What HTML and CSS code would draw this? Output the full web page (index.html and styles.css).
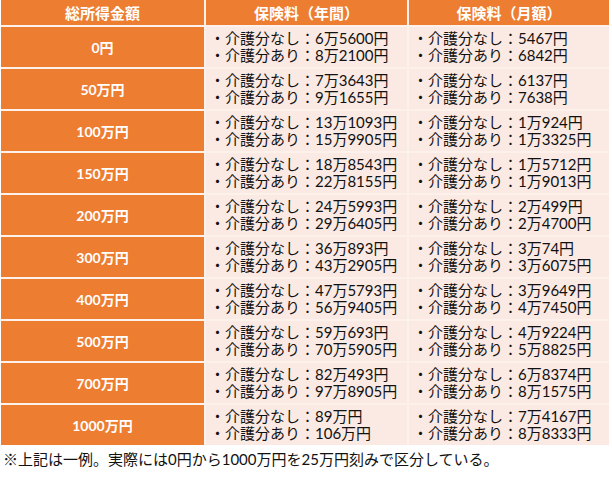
FILE: index.html
```html
<!DOCTYPE html>
<html lang="ja">
<head>
<meta charset="utf-8">
<link rel="stylesheet" href="styles.css">
</head>
<body>
<div class="table">
  <div class="th">総所得金額</div>
  <div class="th">保険料（年間）</div>
  <div class="th">保険料（月額）</div>

  <div class="label">0円</div>
  <div class="cell"><div>・介護分なし：6万5600円</div><div>・介護分あり：8万2100円</div></div>
  <div class="cell"><div>・介護分なし：5467円</div><div>・介護分あり：6842円</div></div>

  <div class="label">50万円</div>
  <div class="cell"><div>・介護分なし：7万3643円</div><div>・介護分あり：9万1655円</div></div>
  <div class="cell"><div>・介護分なし：6137円</div><div>・介護分あり：7638円</div></div>

  <div class="label">100万円</div>
  <div class="cell"><div>・介護分なし：13万1093円</div><div>・介護分あり：15万9905円</div></div>
  <div class="cell"><div>・介護分なし：1万924円</div><div>・介護分あり：1万3325円</div></div>

  <div class="label">150万円</div>
  <div class="cell"><div>・介護分なし：18万8543円</div><div>・介護分あり：22万8155円</div></div>
  <div class="cell"><div>・介護分なし：1万5712円</div><div>・介護分あり：1万9013円</div></div>

  <div class="label">200万円</div>
  <div class="cell"><div>・介護分なし：24万5993円</div><div>・介護分あり：29万6405円</div></div>
  <div class="cell"><div>・介護分なし：2万499円</div><div>・介護分あり：2万4700円</div></div>

  <div class="label">300万円</div>
  <div class="cell"><div>・介護分なし：36万893円</div><div>・介護分あり：43万2905円</div></div>
  <div class="cell"><div>・介護分なし：3万74円</div><div>・介護分あり：3万6075円</div></div>

  <div class="label">400万円</div>
  <div class="cell"><div>・介護分なし：47万5793円</div><div>・介護分あり：56万9405円</div></div>
  <div class="cell"><div>・介護分なし：3万9649円</div><div>・介護分あり：4万7450円</div></div>

  <div class="label">500万円</div>
  <div class="cell"><div>・介護分なし：59万693円</div><div>・介護分あり：70万5905円</div></div>
  <div class="cell"><div>・介護分なし：4万9224円</div><div>・介護分あり：5万8825円</div></div>

  <div class="label">700万円</div>
  <div class="cell"><div>・介護分なし：82万493円</div><div>・介護分あり：97万8905円</div></div>
  <div class="cell"><div>・介護分なし：6万8374円</div><div>・介護分あり：8万1575円</div></div>

  <div class="label">1000万円</div>
  <div class="cell"><div>・介護分なし：89万円</div><div>・介護分あり：106万円</div></div>
  <div class="cell"><div>・介護分なし：7万4167円</div><div>・介護分あり：8万8333円</div></div>
</div>
<p class="note">※上記は一例。実際には0円から1000万円を25万円刻みで区分している。</p>
</body>
</html>
```
FILE: styles.css
```css
html, body {
  margin: 0;
  padding: 0;
  background: #ffffff;
}
body {
  font-family: "Lato", "Noto Sans CJK JP", sans-serif;
  color: #111111;
}
.table {
  display: grid;
  grid-template-columns: 203px 201px 200px;
  grid-template-rows: 25px repeat(10, 40px);
  gap: 2px;
  width: 608px;
  margin-left: 1px;
  background: #fdf1eb;
}
.th {
  background: #ed7d31;
  color: #ffffff;
  font-weight: 700;
  font-size: 15px;
  display: flex;
  align-items: center;
  justify-content: center;
}
.label {
  background: #ed7d31;
  color: #ffffff;
  font-weight: 700;
  font-size: 14px;
  display: flex;
  align-items: center;
  justify-content: center;
}
.cell {
  background: #fbe9e3;
  font-size: 15px;
  line-height: 17px;
  padding-left: 4px;
  display: flex;
  flex-direction: column;
  justify-content: center;
}
.note {
  margin: 5px 0 0 3px;
  font-size: 15px;
  line-height: 19px;
  color: #111111;
}
```
